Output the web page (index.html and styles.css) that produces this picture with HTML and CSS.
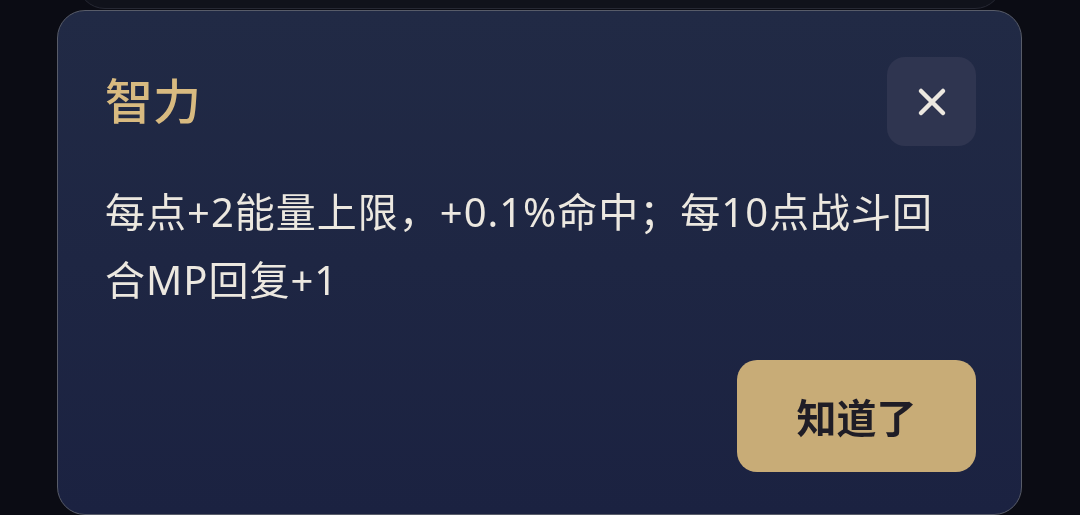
FILE: index.html
```html
<!DOCTYPE html>
<html lang="zh-CN">
<head>
  <meta charset="UTF-8" />
  <meta name="viewport" content="width=device-width, initial-scale=1.0"/>
  <title>属性说明</title>
  <link rel="stylesheet" href="styles.css">
</head>
<body>
  <main class="page">
    <div class="page-card"></div>
  </main>

  <div class="mask">
    <section class="dialog">
      <header class="dialog-head">
        <h2>智力</h2>
        <button class="close" aria-label="关闭">
          <svg width="30" height="30" viewBox="0 0 30 30">
            <path d="M4 4 L26 26 M26 4 L4 26" stroke="#ece8e0" stroke-width="4.5" stroke-linecap="round" fill="none"/>
          </svg>
        </button>
      </header>
      <p class="desc">每点+2能量上限，+0.1%命中；每10点战斗回合MP回复+1</p>
      <div class="actions">
        <button class="ok">知道了</button>
      </div>
    </section>
  </div>
</body>
</html>
```

FILE: styles.css
```css
:root {
  --bg: #0b0c14;
  --gold: #d8ba80;
  --btn: #c8ac77;
  --text: #ece8e0;
}

* {
  margin: 0;
  padding: 0;
  box-sizing: border-box;
  font-family: "Noto Sans", "Noto Sans CJK SC", sans-serif;
}

body {
  background: var(--bg);
  height: 515px;
  overflow: hidden;
}

.page {
  padding: 0 77px;
}

.page-card {
  height: 409px;
  margin-top: -400px;
  border: 1px solid #262833;
  border-radius: 28px;
  background: #10121b;
}

.mask {
  position: fixed;
  inset: 0;
  padding: 10px 58px 0 57px;
}

.dialog {
  height: 505px;
  border: 1.5px solid #585c69;
  border-radius: 28px;
  background: linear-gradient(180deg, #212a45 0%, #1b2241 100%);
  padding: 46px 45px 0 47px;
  display: flex;
  flex-direction: column;
}

.dialog-head {
  display: flex;
  justify-content: space-between;
  align-items: center;
}

.dialog-head h2 {
  color: var(--gold);
  font-family: "Noto Sans CJK SC", sans-serif;
  font-size: 48px;
  font-weight: 500;
  line-height: 1;
  padding-bottom: 8px;
}

.close {
  width: 89px;
  height: 89px;
  border: none;
  border-radius: 18px;
  background: #2f3550;
  display: flex;
  align-items: center;
  justify-content: center;
  cursor: pointer;
}

.desc {
  max-width: 845px;
  margin-top: 32px;
  color: var(--text);
  font-size: 40px;
  line-height: 68px;
  letter-spacing: 1px;
}

.actions {
  display: flex;
  justify-content: flex-end;
  margin-top: 46px;
}

.ok {
  width: 239px;
  height: 112px;
  border: none;
  border-radius: 20px;
  background: var(--btn);
  color: #1f1d26;
  font-family: "Noto Sans CJK SC", sans-serif;
  font-size: 40px;
  font-weight: 700;
  cursor: pointer;
}
```
